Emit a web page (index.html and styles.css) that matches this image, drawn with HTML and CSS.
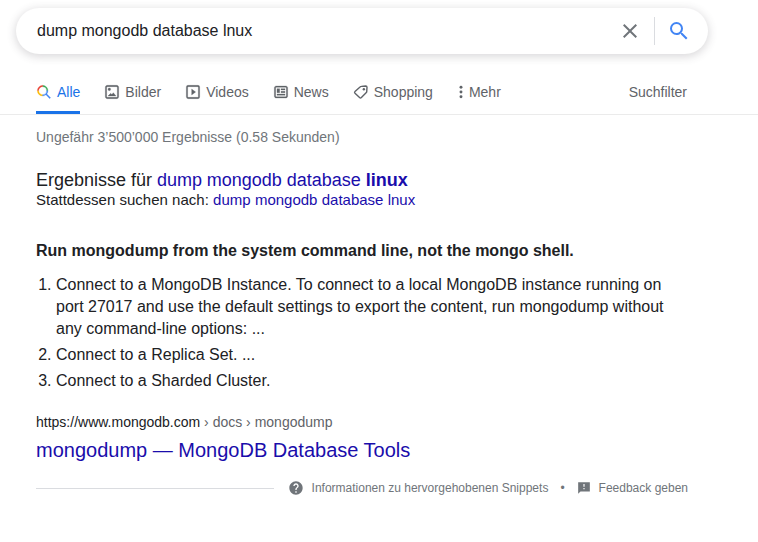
FILE: index.html
```html
<!DOCTYPE html>
<html lang="de">
<head>
<meta charset="utf-8">
<title>dump mongodb database lnux</title>
<link rel="stylesheet" href="styles.css">
</head>
<body>
<header>
  <div class="search">
    <span class="query">dump mongodb database lnux</span>
    <svg class="clear" viewBox="0 0 24 24"><path d="M19 6.41L17.59 5 12 10.59 6.41 5 5 6.41 10.59 12 5 17.59 6.41 19 12 13.41 17.59 19 19 17.59 13.41 12z"/></svg>
    <span class="divider"></span>
    <svg class="submit" viewBox="0 0 24 24"><path d="M15.5 14h-.79l-.28-.27A6.471 6.471 0 0 0 16 9.5 6.5 6.5 0 1 0 9.5 16c1.61 0 3.09-.59 4.23-1.57l.27.28v.79l5 4.99L20.49 19l-4.99-5zm-6 0C7.01 14 5 11.99 5 9.5S7.01 5 9.5 5 14 7.01 14 9.5 11.99 14 9.5 14z"/></svg>
  </div>
  <nav class="tabs">
    <a class="tab active"><svg viewBox="0 0 24 24"><path fill="#34a853" stroke="#34a853" d="M10 2v2a6 6 0 0 1 6 6h2a8 8 0 0 0-8-8"/><path fill="#ea4335" stroke="#ea4335" d="M10 4V2a8 8 0 0 0-8 8h2c0-3.3 2.7-6 6-6"/><path fill="#fbbc04" stroke="#fbbc04" d="M2 10a8 8 0 0 0 8 8v-2c-3.3 0-6-2.69-6-6"/><path fill="#4285f4" stroke="#4285f4" d="M22 20.59l-5.69-5.69A8 8 0 0 0 18 10h-2a6 6 0 0 1-6 6v2a8 8 0 0 0 4.9-1.69L20.59 22"/></svg>Alle</a>
    <a class="tab"><svg class="heavy" viewBox="0 0 24 24"><path d="M14 13l4 5H6l4-4 1.79 1.78L14 13zm-6.01-2.99A2 2 0 0 0 8 6a2 2 0 0 0-.01 4.01zM22 5v14a3 3 0 0 1-3 2.99H5c-1.64 0-3-1.36-3-3V5c0-1.64 1.36-3 3-3h14c1.65 0 3 1.36 3 3zm-2.01 0a1 1 0 0 0-1-1H5a1 1 0 0 0-1 1v14a1 1 0 0 0 1 1h14a1 1 0 0 0 1-1V5"/></svg>Bilder</a>
    <a class="tab"><svg class="heavy" viewBox="0 0 24 24"><path d="M10 16.5l6-4.5-6-4.5v9zM5 20h14a1 1 0 0 0 1-1V5a1 1 0 0 0-1-1H5a1 1 0 0 0-1 1v14a1 1 0 0 0 1 1zm14.5 2H5a3 3 0 0 1-3-3V4.4A2.4 2.4 0 0 1 4.4 2h15.2A2.4 2.4 0 0 1 22 4.4v15.1a2.5 2.5 0 0 1-2.5 2.5"/></svg>Videos</a>
    <a class="tab"><svg class="heavy" viewBox="0 0 24 24"><path d="M12 11h6v2h-6v-2zm-6 6h12v-2H6v2zm0-4h4V7H6v6zm16-7.22v12.44c0 1.54-1.34 2.78-3 2.78H5c-1.64 0-3-1.25-3-2.78V5.78C2 4.26 3.36 3 5 3h14c1.64 0 3 1.25 3 2.78zM19.99 12V5.78c0-.42-.46-.78-1-.78H5c-.54 0-1 .36-1 .78v12.44c0 .42.46.78 1 .78h14c.54 0 1-.36 1-.78V12zM12 9h6V7h-6v2"/></svg>News</a>
    <a class="tab"><svg viewBox="0 0 24 24"><path class="outline" d="M12.5 3.6L19 3a2 2 0 0 1 2 2l-.4 6.4a2 2 0 0 1-.6 1.3l-7.4 7.6a2 2 0 0 1-2.8 0l-6.8-6.4a2 2 0 0 1 0-2.8l8-6.9a2 2 0 0 1 1.5-.6z"/><circle cx="16.3" cy="7.9" r="1.8"/></svg>Shopping</a>
    <a class="tab more"><svg viewBox="0 0 24 24"><circle cx="12" cy="5" r="2.2"/><circle cx="12" cy="12" r="2.2"/><circle cx="12" cy="19" r="2.2"/></svg>Mehr</a>
    <a class="tab filter">Suchfilter</a>
  </nav>
</header>
<main>
  <p class="stats">Ungefähr 3’500’000 Ergebnisse (0.58 Sekunden)</p>
  <p class="corrected">Ergebnisse für <a>dump mongodb database <b>linux</b></a></p>
  <p class="instead">Stattdessen suchen nach: <a>dump mongodb database lnux</a></p>
  <article>
    <h2>Run mongodump from the system command line, not the mongo shell.</h2>
    <ol>
      <li>Connect to a MongoDB Instance. To connect to a local MongoDB instance running on port 27017 and use the default settings to export the content, run mongodump without any command-line options: ...</li>
      <li>Connect to a Replica Set. ...</li>
      <li>Connect to a Sharded Cluster.</li>
    </ol>
    <cite>https://www.mongodb.com<span> › docs › mongodump</span></cite>
    <h3><a>mongodump — MongoDB Database Tools</a></h3>
  </article>
  <footer>
    <span class="rule"></span>
    <svg class="help" viewBox="0 0 24 24"><path d="M12 2C6.48 2 2 6.48 2 12s4.48 10 10 10 10-4.48 10-10S17.52 2 12 2zm1 17h-2v-2h2v2zm2.07-7.75l-.9.92C13.45 12.9 13 13.5 13 15h-2v-.5c0-1.1.45-2.1 1.17-2.83l1.24-1.26c.37-.36.59-.86.59-1.41 0-1.1-.9-2-2-2s-2 .9-2 2H8c0-2.21 1.79-4 4-4s4 1.79 4 4c0 .88-.36 1.68-.93 2.25z"/></svg>
    <span>Informationen zu hervorgehobenen Snippets</span>
    <span class="dot">•</span>
    <svg class="flag" viewBox="0 0 24 24"><path d="M22 2H2v20l4-4h16V2zm-9 12h-2v-2h2v2zm0-4h-2V5h2v5z"/></svg>
    <span>Feedback geben</span>
  </footer>
</main>
</body>
</html>
```
FILE: styles.css
```css
* { box-sizing: border-box; }
body { margin: 0; background: #fff; color: #202124; font-family: "Liberation Sans", Arial, sans-serif; }
p, h2, h3, ol { margin: 0; padding: 0; }
svg { display: block; flex: none; fill: currentColor; }
header { height: 115px; padding-top: 8px; border-bottom: 1px solid #ebebeb; }
.search { display: flex; align-items: center; width: 692px; height: 46px; margin-left: 16px; padding: 0 17px 0 21px; border-radius: 24px; box-shadow: 0 2px 8px 1px rgba(64, 60, 67, .19); }
.query { flex: 1; font-size: 16px; line-height: 22px; }
.clear { width: 24px; height: 24px; color: #70757a; }
.divider { width: 1px; height: 28px; margin: 0 12px; background: #dadce0; }
.submit { width: 24px; height: 24px; color: #4285f4; }
.tabs { display: flex; width: 651px; height: 42px; margin: 18px 0 0 36px; font-size: 14px; line-height: 16px; color: #5f6368; }
.tab { display: flex; align-items: flex-start; height: 42px; padding-top: 12px; margin-right: 24px; white-space: nowrap; }
.tab svg { width: 16px; height: 16px; margin-right: 5px; }
.active { color: #1a73e8; border-bottom: 3px solid #1a73e8; }
.active svg { stroke-width: .4; }
.heavy { stroke: currentColor; stroke-width: .4; }
.outline { fill: none; stroke: currentColor; stroke-width: 2.1; }
.more { margin-left: -4px; }
.more svg { margin-right: 0; }
.filter { margin: 0 0 0 auto; }
main { width: 652px; margin-left: 36px; }
a { color: inherit; }
p a, h3 a { color: #1a0dab; }
.stats { padding-top: 14px; font-size: 14px; line-height: 16px; color: #70757a; }
.corrected { margin-top: 24px; font-size: 18px; line-height: 22px; word-spacing: -.1px; }
.instead { font-size: 15px; line-height: 18px; word-spacing: .1px; }
h2 { margin-top: 30px; font-size: 16px; line-height: 24px; }
ol { margin-top: 11px; padding-left: 20px; font-size: 16px; line-height: 22px; }
li { margin-bottom: 4px; }
cite { display: block; margin-top: 21px; font-size: 14px; line-height: 18px; font-style: normal; }
cite span { color: #5f6368; }
h3 { margin-top: 6px; font-size: 20px; line-height: 26px; font-weight: 400; }
footer { display: flex; align-items: center; height: 16px; margin-top: 17px; font-size: 12px; line-height: 16px; color: #70757a; white-space: nowrap; }
.rule { flex: 1; height: 1px; margin-right: 14px; background: #dadce0; }
.help { width: 16px; height: 16px; margin-right: 8px; }
.dot { margin: 0 12px; }
.flag { width: 14px; height: 14px; margin-right: 8px; }
```
